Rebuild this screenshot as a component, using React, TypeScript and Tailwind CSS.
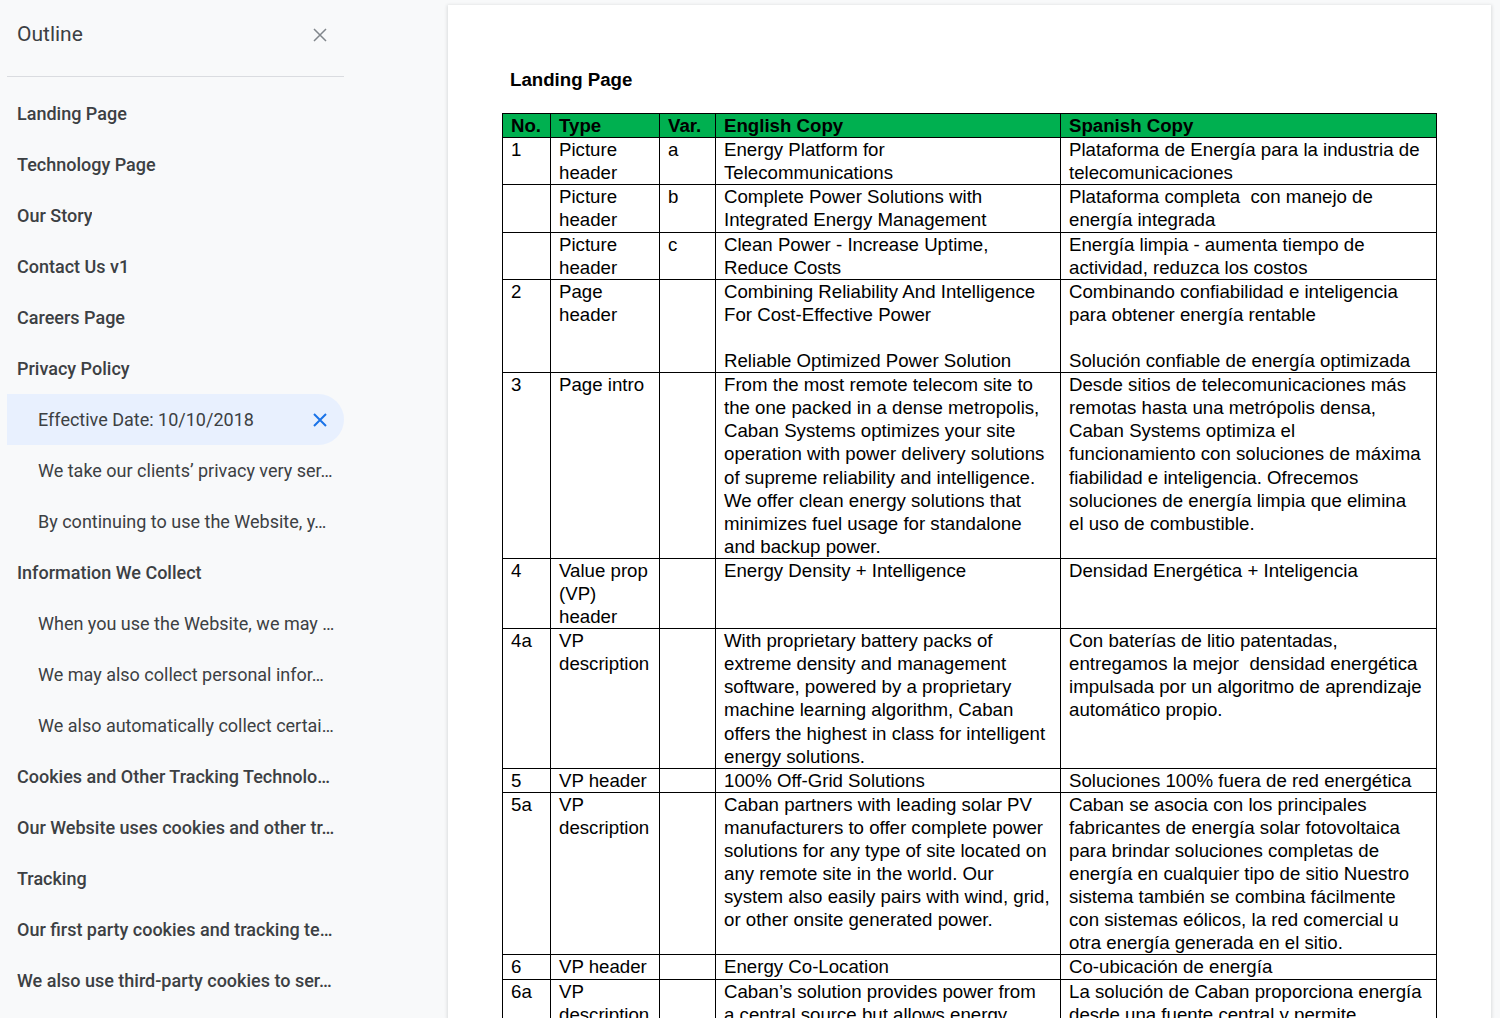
import React from 'react';

type OutlineItem = { label: string; sub?: boolean; active?: boolean };

const outline: OutlineItem[] = [
  { label: 'Landing Page' },
  { label: 'Technology Page' },
  { label: 'Our Story' },
  { label: 'Contact Us v1' },
  { label: 'Careers Page' },
  { label: 'Privacy Policy' },
  { label: 'Effective Date: 10/10/2018', sub: true, active: true },
  { label: 'We take our clients\u2019 privacy very ser\u2026', sub: true },
  { label: 'By continuing to use the Website, y\u2026', sub: true },
  { label: 'Information We Collect' },
  { label: 'When you use the Website, we may \u2026', sub: true },
  { label: 'We may also collect personal infor\u2026', sub: true },
  { label: 'We also automatically collect certai\u2026', sub: true },
  { label: 'Cookies and Other Tracking Technolo\u2026' },
  { label: 'Our Website uses cookies and other tr\u2026' },
  { label: 'Tracking' },
  { label: 'Our first party cookies and tracking te\u2026' },
  { label: 'We also use third-party cookies to ser\u2026' },
];

type Row = { no: string; type: string[]; v: string; en: string[]; es: string[] };

const rows: Row[] = [
  {
    no: '1',
    type: ['Picture', 'header'],
    v: 'a',
    en: ['Energy Platform for', 'Telecommunications'],
    es: ['Plataforma de Energía para la industria de', 'telecomunicaciones'],
  },
  {
    no: '',
    type: ['Picture', 'header'],
    v: 'b',
    en: ['Complete Power Solutions with', 'Integrated Energy Management'],
    es: ['Plataforma completa  con manejo de', 'energía integrada'],
  },
  {
    no: '',
    type: ['Picture', 'header'],
    v: 'c',
    en: ['Clean Power - Increase Uptime,', 'Reduce Costs'],
    es: ['Energía limpia - aumenta tiempo de', 'actividad, reduzca los costos'],
  },
  {
    no: '2',
    type: ['Page', 'header'],
    v: '',
    en: ['Combining Reliability And Intelligence', 'For Cost-Effective Power', '', 'Reliable Optimized Power Solution'],
    es: ['Combinando confiabilidad e inteligencia', 'para obtener energía rentable', '', 'Solución confiable de energía optimizada'],
  },
  {
    no: '3',
    type: ['Page intro'],
    v: '',
    en: [
      'From the most remote telecom site to',
      'the one packed in a dense metropolis,',
      'Caban Systems optimizes your site',
      'operation with power delivery solutions',
      'of supreme reliability and intelligence.',
      'We offer clean energy solutions that',
      'minimizes fuel usage for standalone',
      'and backup power.',
    ],
    es: [
      'Desde sitios de telecomunicaciones más',
      'remotas hasta una metrópolis densa,',
      'Caban Systems optimiza el',
      'funcionamiento con soluciones de máxima',
      'fiabilidad e inteligencia. Ofrecemos',
      'soluciones de energía limpia que elimina',
      'el uso de combustible.',
    ],
  },
  {
    no: '4',
    type: ['Value prop', '(VP)', 'header'],
    v: '',
    en: ['Energy Density + Intelligence'],
    es: ['Densidad Energética + Inteligencia'],
  },
  {
    no: '4a',
    type: ['VP', 'description'],
    v: '',
    en: [
      'With proprietary battery packs of',
      'extreme density and management',
      'software, powered by a proprietary',
      'machine learning algorithm, Caban',
      'offers the highest in class for intelligent',
      'energy solutions.',
    ],
    es: [
      'Con baterías de litio patentadas,',
      'entregamos la mejor  densidad energética',
      'impulsada por un algoritmo de aprendizaje',
      'automático propio.',
    ],
  },
  {
    no: '5',
    type: ['VP header'],
    v: '',
    en: ['100% Off-Grid Solutions'],
    es: ['Soluciones 100% fuera de red energética'],
  },
  {
    no: '5a',
    type: ['VP', 'description'],
    v: '',
    en: [
      'Caban partners with leading solar PV',
      'manufacturers to offer complete power',
      'solutions for any type of site located on',
      'any remote site in the world. Our',
      'system also easily pairs with wind, grid,',
      'or other onsite generated power.',
    ],
    es: [
      'Caban se asocia con los principales',
      'fabricantes de energía solar fotovoltaica',
      'para brindar soluciones completas de',
      'energía en cualquier tipo de sitio Nuestro',
      'sistema también se combina fácilmente',
      'con sistemas eólicos, la red comercial u',
      'otra energía generada en el sitio.',
    ],
  },
  {
    no: '6',
    type: ['VP header'],
    v: '',
    en: ['Energy Co-Location'],
    es: ['Co-ubicación de energía'],
  },
  {
    no: '6a',
    type: ['VP', 'description'],
    v: '',
    en: [
      'Caban\u2019s solution provides power from',
      'a central source but allows energy',
      'to be shared among multiple tenants',
      'on the same site.',
    ],
    es: [
      'La solución de Caban proporciona energía',
      'desde una fuente central y permite',
      'compartir la energía entre varios',
      'operadores en el mismo sitio.',
    ],
  },
];

const CloseIcon = ({ className, width }: { className: string; width: number }) => (
  <svg viewBox="0 0 14 14" className={className} fill="none" stroke="currentColor" strokeWidth={width}>
    <path d="M1 1 13 13M13 1 1 13" />
  </svg>
);

const Lines = ({ lines }: { lines: string[] }) => (
  <>
    {lines.map((l, i) => (
      <div key={i} className="whitespace-pre">
        {l === '' ? '\u00a0' : l}
      </div>
    ))}
  </>
);

const cell = 'border border-black align-top px-2 py-0';

export default function App() {
  return (
    <div className="flex h-[1018px] w-[1500px] overflow-hidden bg-[#f8f9fa]">
      {/* Outline sidebar */}
      <aside className="w-[448px] shrink-0 font-['Roboto',sans-serif] text-[#3c4043]">
        <div className="mt-[21px] flex h-[28px] items-center justify-between pl-[17px] pr-[121px]">
          <span className="text-[21px]">Outline</span>
          <CloseIcon className="h-[14px] w-[14px] text-[#80868b]" width={1.5} />
        </div>
        <div className="mx-[7px] mt-[27px] h-px w-[337px] bg-[#dadce0]" />
        <div className="mt-[11px]">
          {outline.map((item) => (
            <div
              key={item.label}
              className={`flex h-[51px] w-[337px] items-center ${
                item.active ? 'ml-[7px] rounded-r-full bg-[#e8f0fe] pl-[31px] pr-[17px]' : item.sub ? 'pl-[38px]' : 'pl-[17px]'
              }`}
            >
              <span
                className={`truncate text-[18px] ${item.sub ? 'font-normal' : 'font-medium'} ${item.active ? 'flex-1' : ''}`}
              >
                {item.label}
              </span>
              {item.active && <CloseIcon className="h-[14px] w-[14px] text-[#1a73e8]" width={2} />}
            </div>
          ))}
        </div>
      </aside>

      {/* Document */}
      <main className="flex-1 pr-[9px] pt-[5px]">
        <div className="h-full w-[1043px] bg-white pl-[54px] pt-[63px] font-['Liberation_Sans',Arial,sans-serif] text-[18.67px] leading-[23.1px] text-black shadow-[0_1px_3px_1px_rgba(60,64,67,0.15)]">
          <div className="pl-2 font-bold">Landing Page</div>
          <table className="mt-[22px] w-[934px] table-fixed border-collapse">
            <colgroup>
              <col className="w-[48px]" />
              <col className="w-[109px]" />
              <col className="w-[56px]" />
              <col className="w-[345px]" />
              <col className="w-[376px]" />
            </colgroup>
            <thead>
              <tr className="bg-[#00b050] text-left font-bold">
                <th className={cell}>No.</th>
                <th className={cell}>Type</th>
                <th className={cell}>Var.</th>
                <th className={cell}>English Copy</th>
                <th className={cell}>Spanish Copy</th>
              </tr>
            </thead>
            <tbody>
              {rows.map((r, i) => (
                <tr key={i}>
                  <td className={cell}>{r.no}</td>
                  <td className={cell}>
                    <Lines lines={r.type} />
                  </td>
                  <td className={cell}>{r.v}</td>
                  <td className={cell}>
                    <Lines lines={r.en} />
                  </td>
                  <td className={cell}>
                    <Lines lines={r.es} />
                  </td>
                </tr>
              ))}
            </tbody>
          </table>
        </div>
      </main>
    </div>
  );
}
